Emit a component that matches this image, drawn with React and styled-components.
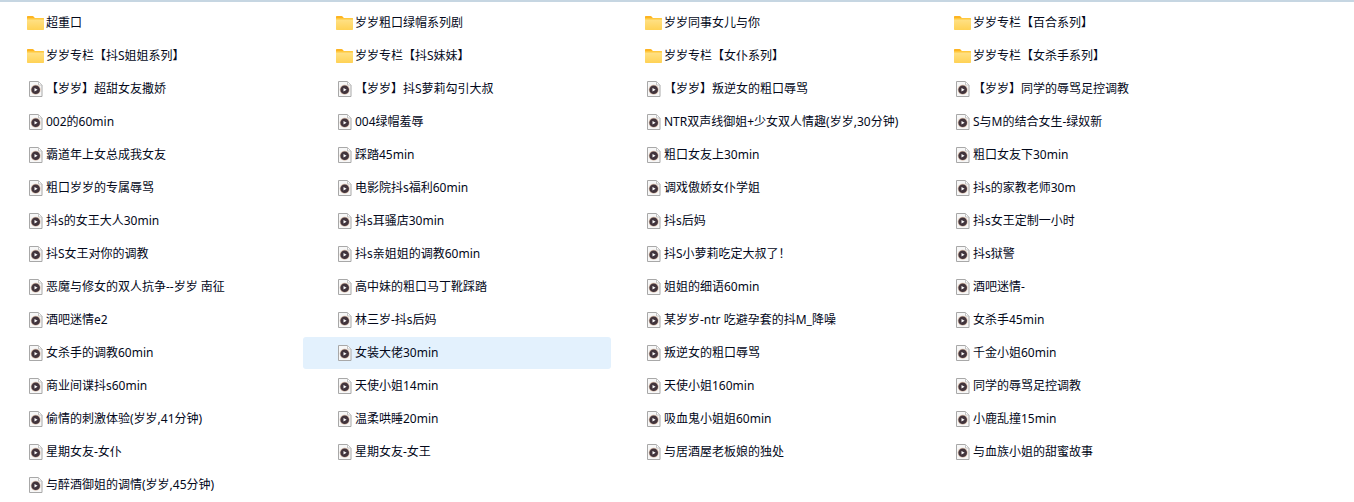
import styled, { createGlobalStyle } from 'styled-components';

const GlobalStyle = createGlobalStyle`
  html, body {
    margin: 0;
    padding: 0;
    background: #fff;
    overflow: hidden;
  }
`;

const rows = [
  ['d:超重口', 'd:岁岁粗口绿帽系列剧', 'd:岁岁同事女儿与你', 'd:岁岁专栏【百合系列】'],
  ['d:岁岁专栏【抖S姐姐系列】', 'd:岁岁专栏【抖S妹妹】', 'd:岁岁专栏【女仆系列】', 'd:岁岁专栏【女杀手系列】'],
  ['【岁岁】超甜女友撒娇', '【岁岁】抖S萝莉勾引大叔', '【岁岁】叛逆女的粗口辱骂', '【岁岁】同学的辱骂足控调教'],
  ['002的60min', '004绿帽羞辱', 'NTR双声线御姐+少女双人情趣(岁岁,30分钟)', 'S与M的结合女生-绿奴新'],
  ['霸道年上女总成我女友', '踩踏45min', '粗口女友上30min', '粗口女友下30min'],
  ['粗口岁岁的专属辱骂', '电影院抖s福利60min', '调戏傲娇女仆学姐', '抖s的家教老师30m'],
  ['抖s的女王大人30min', '抖s耳骚店30min', '抖s后妈', '抖s女王定制一小时'],
  ['抖S女王对你的调教', '抖s亲姐姐的调教60min', '抖S小萝莉吃定大叔了！', '抖s狱警'],
  ['恶魔与修女的双人抗争--岁岁 南征', '高中妹的粗口马丁靴踩踏', '姐姐的细语60min', '酒吧迷情-'],
  ['酒吧迷情e2', '林三岁-抖s后妈', '某岁岁-ntr 吃避孕套的抖M_降噪', '女杀手45min'],
  ['女杀手的调教60min', '女装大佬30min', '叛逆女的粗口辱骂', '千金小姐60min'],
  ['商业间谍抖s60min', '天使小姐14min', '天使小姐160min', '同学的辱骂足控调教'],
  ['偷情的刺激体验(岁岁,41分钟)', '温柔哄睡20min', '吸血鬼小姐姐60min', '小鹿乱撞15min'],
  ['星期女友-女仆', '星期女友-女王', '与居酒屋老板娘的独处', '与血族小姐的甜蜜故事'],
  ['与醉酒御姐的调情(岁岁,45分钟)'],
];

const SELECTED = '女装大佬30min';

const FolderIcon = () => (
  <svg width="17" height="14" viewBox="0 0 17 14">
    <defs>
      <linearGradient id="folderBody" x1="0" y1="0" x2="0" y2="1">
        <stop offset="0" stopColor="#ffe38c" />
        <stop offset="1" stopColor="#ffd255" />
      </linearGradient>
    </defs>
    <path d="M0 1C0 .4.4 0 1 0h4.600c.4 0 .7.2 1 .5L8.200 2.500H0z" fill="#fdb422" />
    <path d="M0 2h16c.6 0 1 .4 1 1v10c0 .6-.4 1-1 1H1c-.6 0-1-.4-1-1z" fill="url(#folderBody)" />
    <path d="M0 2h16c.6 0 1 .4 1 1v.6H0z" fill="#ffc83d" />
  </svg>
);

const VideoIcon = () => (
  <svg width="14" height="16" viewBox="0 0 14 16">
    <path d="M.5.5h9l3.500 3.500v11.500H.5z" fill="#f7f7f7" stroke="#a8a8a8" />
    <path d="M9.500.5v3.500h3.500z" fill="#fff" stroke="#c4c4c4" />
    <circle cx="6.700" cy="8.800" r="5" fill="#d9bfae" />
    <circle cx="6.700" cy="8.800" r="4.300" fill="#41343c" />
    <path d="M5.500 7v3.600L8.600 8.800z" fill="#fff" />
  </svg>
);

export default function App() {
  return (
    <Page>
      <GlobalStyle />
      <TopLine />
      <FileGrid>
        {rows.flat().map((entry, i) => {
          const isFolder = entry.startsWith('d:');
          const name = isFolder ? entry.slice(2) : entry;
          return (
            <FileItem key={i} $selected={name === SELECTED}>
              <IconSlot>{isFolder ? <FolderIcon /> : <VideoIcon />}</IconSlot>
              <FileName>{name}</FileName>
            </FileItem>
          );
        })}
      </FileGrid>
    </Page>
  );
}

const Page = styled.div`
  width: 1354px;
  height: 502px;
  overflow: hidden;
  background: #fff;
`;

const TopLine = styled.div`
  height: 2px;
  background: #c6d6e2;
`;

const FileGrid = styled.div`
  /* first column starts slightly off the page */
  margin: 5px 0 0 -6px;
  display: grid;
  grid-template-columns: repeat(4, 308px);
  grid-auto-rows: 32px;
  gap: 1px;
`;

const FileItem = styled.div`
  display: flex;
  align-items: center;
  padding-left: 33px;
  border-radius: 3px;
  background: ${props => (props.$selected ? '#e3f1fd' : 'transparent')};
`;

const IconSlot = styled.span`
  width: 17px;
  margin-right: 2px;
  display: flex;
  justify-content: center;
  flex-shrink: 0;
`;

const FileName = styled.span`
  font-family: "Noto Sans", "Noto Sans CJK SC", sans-serif;
  font-size: 12px;
  line-height: 16px;
  color: #03081a;
  white-space: nowrap;
`;
